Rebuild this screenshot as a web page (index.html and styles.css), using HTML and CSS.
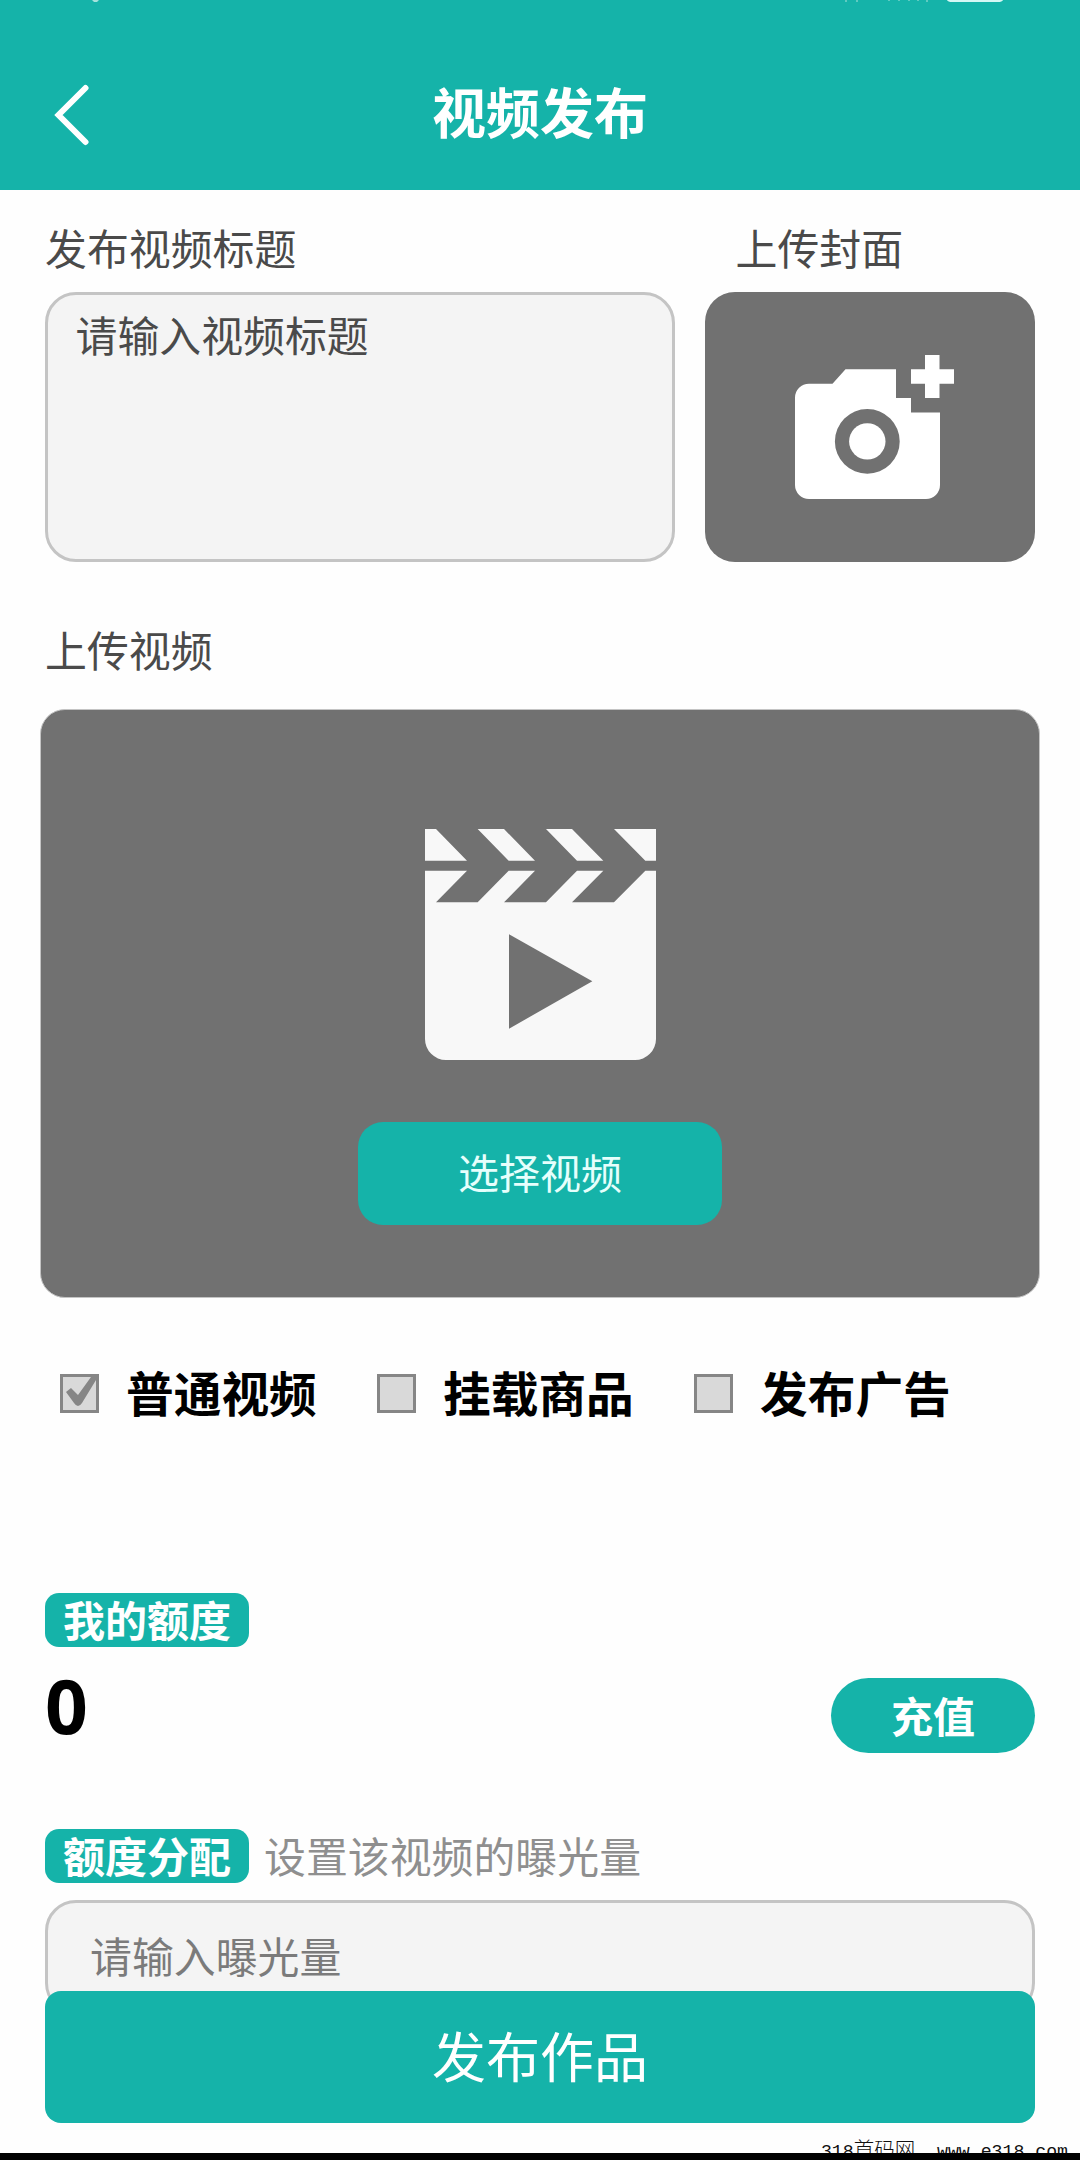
FILE: index.html
```html
<!DOCTYPE html>
<html lang="zh-CN">
<head>
<meta charset="utf-8">
<title>视频发布</title>
<link rel="stylesheet" href="styles.css">
</head>
<body>
<div class="app">
  <header class="header">
    <svg class="status" viewBox="0 0 1080 6" aria-hidden="true">
      <path d="M92 0h7l-2 2h-3z" fill="#a5e2dc"/>
      <path d="M845 0h2v2h-2zM856 0h2v2h-2zM888 0h2v1h-2zM898 0h2v1h-2zM908 0h2v1h-2zM917 0h2v1h-2zM926 0h2v2h-2z" fill="#5fcac1"/>
      <path d="M947 0h56q-1 2-5 2h-46q-4 0-5-2z" fill="#d5f8f5"/>
    </svg>
    <div class="nav">
      <svg class="back" viewBox="0 0 36 62"><path d="M32.500 4 5.500 31l27 27" fill="none" stroke="#fff" stroke-width="6" stroke-linecap="round" stroke-linejoin="miter"/></svg>
      <h1 class="title">视频发布</h1>
    </div>
  </header>

  <main class="content">
    <section class="top-row">
      <div class="field">
        <div class="label">发布视频标题</div>
        <div class="textarea">请输入视频标题</div>
      </div>
      <div class="field">
        <div class="label label-cover">上传封面</div>
        <div class="cover">
          <svg class="camera" viewBox="0 0 159 144" fill="#fff">
            <path d="M130 0h14.5v14.3H159v14.4h-14.5V43H130V28.700h-14V14.300h14z"/>
            <path fill-rule="evenodd" d="M50.500 14.300H101V43h15v14.400h29V130a14 14 0 0 1-14 14H14a14 14 0 0 1-14-14V42.700a14 14 0 0 1 14-14h23.500zM72.300 54a32.400 32.400 0 1 0 0 64.800 32.400 32.400 0 1 0 0-64.800z"/>
            <circle cx="72.300" cy="86.400" r="18.200"/>
          </svg>
        </div>
      </div>
    </section>

    <div class="label label-video">上传视频</div>
    <section class="video">
      <svg class="clapper" viewBox="0 0 693 693" fill="#f8f8f8">
        <path d="M0 0H33L126 95H0zM158 0h79l93 95h-79zM363 0h78l94 95h-79zM567 0h126v95h-32z"/>
        <path fill-rule="evenodd" d="M0 125H126L33 220H158L251 125H330L237 220H363L456 125H535L441 220H567L661 125H693V630a63 63 0 0 1-63 63H63a63 63 0 0 1-63-63zM252 316V599L502 457z"/>
      </svg>
      <div class="choose">选择视频</div>
    </section>

    <section class="checks">
      <div class="check"><span class="box"><svg viewBox="0 0 39 39"><path d="M6 18l5-4 7 7L31 3h5v3L22 29q-4 6-8 0z" fill="#868686"/></svg></span>普通视频</div>
      <div class="check"><span class="box"></span>挂载商品</div>
      <div class="check"><span class="box"></span>发布广告</div>
    </section>

    <div class="badge">我的额度</div>
    <section class="balance">
      <span class="amount">0</span>
      <span class="recharge">充值</span>
    </section>

    <section class="alloc">
      <span class="badge">额度分配</span>
      <span class="hint">设置该视频的曝光量</span>
    </section>
    <div class="input">请输入曝光量</div>
  </main>

  <div class="publish">发布作品</div>
  <footer class="footer"><span class="site">318<span class="site-cn">首码网</span>&nbsp; www.e318.com</span></footer>
</div>
</body>
</html>
```
FILE: styles.css
```css
* { box-sizing: border-box; }
body {
  margin: 0;
  background: #fefefe;
  font-family: "Noto Sans CJK SC", sans-serif;
  color: #4a4a4a;
}
.app {
  width: 1080px;
  height: 2160px;
  overflow: hidden;
  position: relative;
  display: flex;
  flex-direction: column;
}
.header {
  height: 190px;
  background: #15b3a9;
  flex: none;
}
.status { display: block; width: 1080px; height: 6px; }
.nav {
  display: grid;
  grid-template-columns: 100px 1fr 100px;
  align-items: center;
  height: 212px;
  margin-top: -1px;
}
.back { width: 36px; height: 62px; margin: 8px 0 0 53px; }
.title {
  margin: 0;
  color: #fff;
  font-size: 54px;
  line-height: 80px;
  font-weight: 700;
  text-align: center;
}
.content { padding: 0 45px; }
.label { font-size: 41.9px; line-height: 60px; }
.top-row {
  display: grid;
  grid-template-columns: 630px 330px;
  justify-content: space-between;
  padding-top: 27px;
}
.label + .textarea, .label + .cover { margin-top: 15px; }
.label-cover { padding-left: 30.5px; }
.textarea {
  height: 270px;
  border: 3px solid #c4c4c4;
  border-radius: 31px;
  background: #f4f4f4;
  padding: 9px 27.5px;
  font-size: 41.9px;
  line-height: 60px;
}
.cover {
  height: 270px;
  border-radius: 30px;
  background: #717171;
  display: flex;
  align-items: center;
  justify-content: center;
}
.camera { width: 159px; height: 144px; margin-left: 9px; }
.label-video { margin-top: 57px; }
.video {
  width: 1000px;
  height: 589px;
  margin: 30px 0 0 -5px;
  border: 1px solid #c4c4c4;
  border-radius: 25px;
  background: #717171;
  display: flex;
  flex-direction: column;
  align-items: center;
  padding-top: 119px;
}
.clapper { width: 231px; height: 231px; }
.choose {
  width: 364px;
  height: 103px;
  margin-top: 62px;
  border-radius: 25px;
  background: #15b3a9;
  color: #e6fffc;
  font-size: 41px;
  line-height: 98px;
  text-align: center;
}
.checks {
  display: grid;
  grid-template-columns: repeat(3, 317px);
  margin-top: 55px;
  padding-left: 15px;
}
.check {
  display: flex;
  align-items: flex-start;
  gap: 27px;
  height: 81px;
  color: #000;
  font-size: 47.7px;
  line-height: 77px;
  font-weight: 700;
}
.box {
  display: block;
  width: 39px;
  height: 39px;
  margin-top: 21px;
  border: 3px solid #868686;
  background: #d9d9d9;
}
.box svg { display: block; width: 39px; height: 39px; margin: -3px; }
.badge {
  width: 204px;
  height: 54px;
  border-radius: 14px;
  background: #15b3a9;
  color: #fff;
  font-size: 42px;
  line-height: 52px;
  font-weight: 700;
  text-align: center;
}
.checks + .badge { margin-top: 159px; }
.balance {
  display: flex;
  justify-content: space-between;
  margin-top: 31px;
  height: 75px;
}
.amount {
  color: #000;
  font-family: "Noto Sans", "Noto Sans CJK SC", sans-serif;
  font-size: 75px;
  line-height: 54px;
  font-weight: 700;
}
.recharge {
  width: 204px;
  height: 75px;
  border-radius: 38px;
  background: #15b3a9;
  color: #fff;
  font-size: 42px;
  line-height: 73px;
  font-weight: 700;
  text-align: center;
}
.alloc {
  display: flex;
  gap: 15px;
  margin-top: 76px;
}
.hint { color: #8f8f8f; font-size: 41.9px; line-height: 52px; }
.input {
  height: 114px;
  margin-top: 17px;
  border: 3px solid #c4c4c4;
  border-radius: 31px;
  background: #f4f4f4;
  padding-left: 42px;
  color: #7b7b7b;
  font-size: 41.9px;
  line-height: 104px;
}
.publish {
  position: absolute;
  left: 45px;
  right: 45px;
  bottom: 37px;
  height: 132px;
  border-radius: 16px;
  background: #15b3a9;
  color: #fff;
  font-size: 54px;
  line-height: 128px;
  text-align: center;
}
.footer {
  height: 22px;
  margin-top: auto;
  flex: none;
  border-bottom: 7px solid #000;
  overflow: hidden;
  padding-right: 12px;
  text-align: right;
  color: #111;
}
.site {
  display: block;
  font: 18.2px/24px "Liberation Mono", monospace;
  white-space: nowrap;
}
.site-cn { font: 300 20.5px/20px "Noto Sans CJK SC", sans-serif; }
```
